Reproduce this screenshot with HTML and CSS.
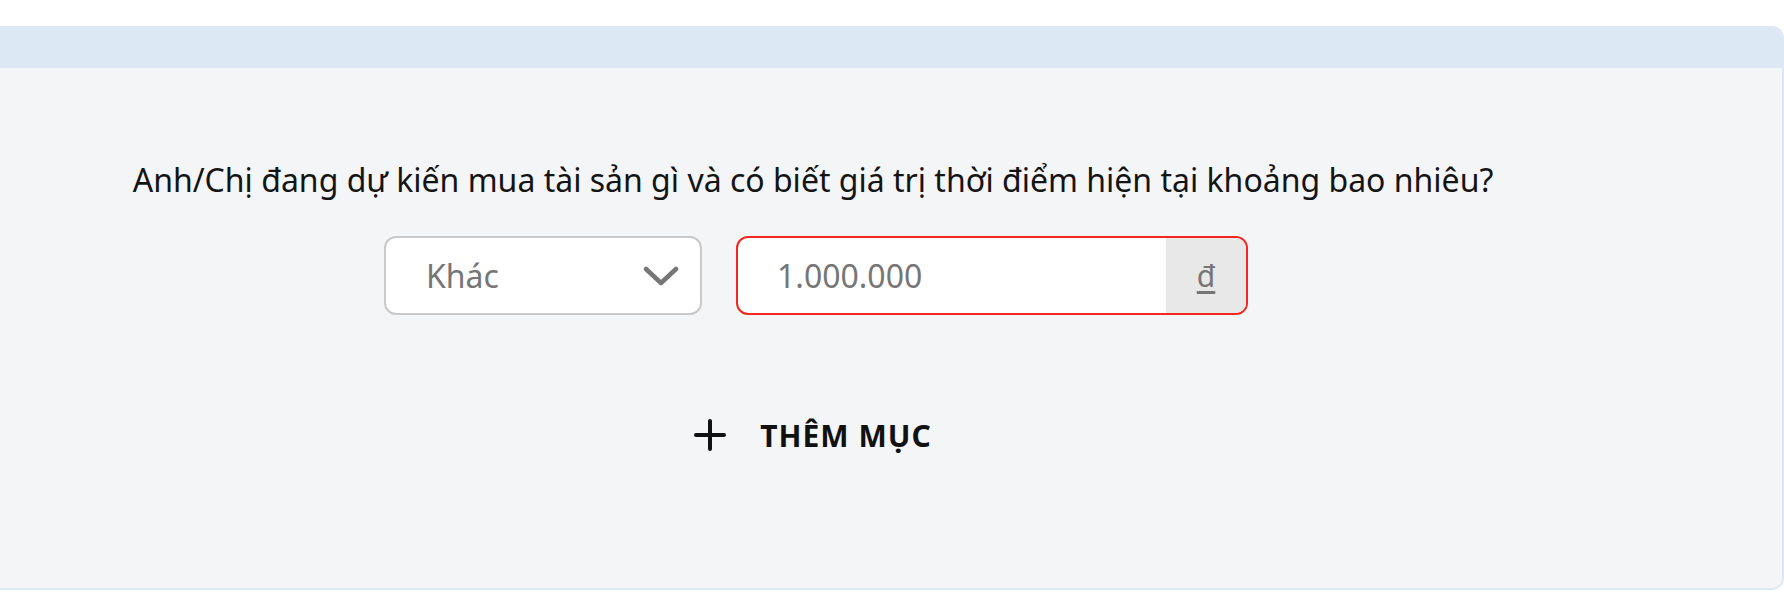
FILE: index.html
```html
<!DOCTYPE html>
<html lang="vi">
<head>
<meta charset="utf-8">
<title>Tài sản dự kiến mua</title>
<link rel="stylesheet" href="styles.css">
</head>
<body>
<div class="page">
  <section class="card">
    <div class="card-head"></div>
    <div class="card-body">
      <p class="question">Anh/Chị đang dự kiến mua tài sản gì và có biết giá trị thời điểm hiện tại khoảng bao nhiêu?</p>
      <div class="fields">
        <div class="select">
          <span class="select-value">Khác</span>
          <svg class="chevron" width="36" height="22" viewBox="0 0 36 22"><path d="M3 4 L18 18 L33 4" fill="none" stroke="#767676" stroke-width="4.5" stroke-linecap="round" stroke-linejoin="round"/></svg>
        </div>
        <div class="money">
          <span class="money-value">1.000.000</span>
          <span class="money-unit">đ</span>
        </div>
      </div>
      <button class="add" type="button">
        <svg class="plus" width="32" height="32" viewBox="0 0 32 32"><path d="M16 2 V30 M2 16 H30" fill="none" stroke="#111" stroke-width="4" stroke-linecap="round"/></svg>
        <span class="add-label">THÊM MỤC</span>
      </button>
    </div>
  </section>
</div>
</body>
</html>
```

FILE: styles.css
```css
* { box-sizing: border-box; }

html, body {
  margin: 0;
  padding: 0;
  background: #ffffff;
  font-family: "Noto Sans", "Open Sans", sans-serif;
}

.page {
  padding-top: 26px;
}

.card {
  width: 100%;
  border: 2px solid #dce9f5;
  border-left: 0;
  border-radius: 0 12px 12px 0;
  background: #f4f5f7;
  overflow: hidden;
}

.card-head {
  height: 40px;
  background: #dce9f5;
}

.card-body {
  height: 520px;
  padding: 90px 156px 0 0;
  display: flex;
  flex-direction: column;
  align-items: center;
}

.question {
  margin: 0;
  font-size: 32px;
  line-height: 44px;
  color: #141414;
  text-align: center;
}

.fields {
  margin: 34px 0 0 6px;
  display: flex;
  gap: 34px;
}

.select {
  width: 318px;
  height: 79px;
  border: 2px solid #c9c9c9;
  border-radius: 12px;
  background: #ffffff;
  display: flex;
  align-items: center;
  justify-content: space-between;
  padding: 0 21px 0 40px;
}

.select-value,
.money-value {
  font-size: 32px;
  color: #767676;
  line-height: 1;
}

.money {
  width: 512px;
  height: 79px;
  border: 2px solid #f2281e;
  border-radius: 12px;
  background: #ffffff;
  display: flex;
  align-items: stretch;
  overflow: hidden;
}

.money-value {
  flex: 1;
  display: flex;
  align-items: center;
  padding-left: 39px;
}

.money-unit {
  width: 80px;
  background: #e8e8e8;
  display: flex;
  align-items: center;
  justify-content: center;
  font-size: 30px;
  color: #767676;
  text-decoration: underline;
  text-underline-offset: 4px;
}

.add {
  margin-top: 90px;
  height: 60px;
  border: 0;
  background: transparent;
  padding: 0;
  display: flex;
  align-items: center;
  gap: 34px;
  font-family: inherit;
  cursor: pointer;
}

.add-label {
  font-size: 30px;
  font-weight: 700;
  letter-spacing: 1px;
  color: #111111;
}
```
